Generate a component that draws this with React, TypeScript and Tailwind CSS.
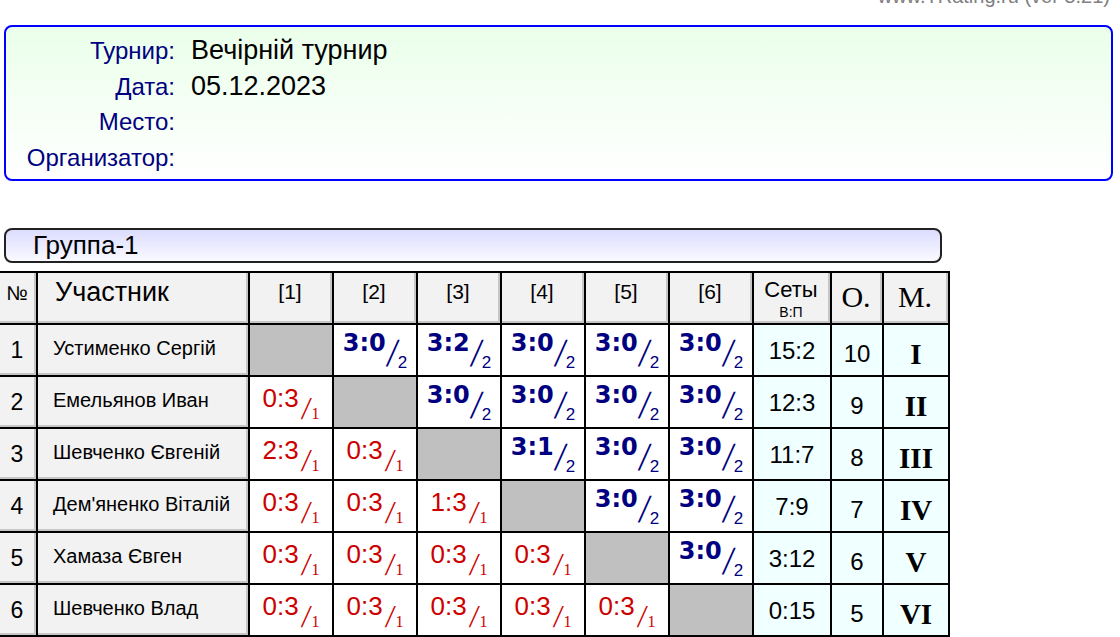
import React from "react";

const players = [
  "Устименко Сергій",
  "Емельянов Иван",
  "Шевченко Євгеній",
  "Дем'яненко Віталій",
  "Хамаза Євген",
  "Шевченко Влад",
];

const results = [
  ["", "3:0", "3:2", "3:0", "3:0", "3:0"],
  ["0:3", "", "3:0", "3:0", "3:0", "3:0"],
  ["2:3", "0:3", "", "3:1", "3:0", "3:0"],
  ["0:3", "0:3", "1:3", "", "3:0", "3:0"],
  ["0:3", "0:3", "0:3", "0:3", "", "3:0"],
  ["0:3", "0:3", "0:3", "0:3", "0:3", ""],
];

const totals = [
  { sets: "15:2", pts: "10", place: "I" },
  { sets: "12:3", pts: "9", place: "II" },
  { sets: "11:7", pts: "8", place: "III" },
  { sets: "7:9", pts: "7", place: "IV" },
  { sets: "3:12", pts: "6", place: "V" },
  { sets: "0:15", pts: "5", place: "VI" },
];

const head = "h-[50px] bg-[#f2f2f2] border-r-2 border-b-2 border-[#c6c6c6]";
const side = "h-[50px] bg-[#f0ffff]";

function Score({ v }: { v: string }) {
  if (!v) return <div className="h-[50px] bg-[#c0c0c0]" />;
  if (v.startsWith("3")) {
    return (
      <div className="flex h-[50px] items-start justify-center bg-white text-[#000080]">
        <span className="mt-[6px] font-['DejaVu_Sans',sans-serif] text-[24px] font-bold leading-none">{v}</span>
        <span className="mt-[8px] ml-[1px] -skew-x-6 font-['Liberation_Serif',serif] text-[40px] leading-none">/</span>
        <span className="mt-[29px] text-[17px] leading-none">2</span>
      </div>
    );
  }
  return (
    <div className="flex h-[50px] items-start justify-center bg-white text-[#cc0000]">
      <span className="mt-[8px] text-[26px] leading-none">{v}</span>
      <span className="mt-[15px] ml-[3px] -skew-x-6 font-['Liberation_Serif',serif] text-[32px] leading-none">/</span>
      <span className="mt-[29px] ml-[1px] font-['Liberation_Serif',serif] text-[16px] leading-none">1</span>
    </div>
  );
}

export default function App() {
  return (
    <div className="h-[637px] w-[1120px] overflow-hidden bg-white font-['Liberation_Sans',Arial,sans-serif] text-black">
      <div className="h-[25px] overflow-hidden pr-[10px] text-right">
        <div className="-mt-[14px] text-[20px] leading-[20px] text-[#808080]">www.TRating.ru (ver 5.21)</div>
      </div>

      <div className="ml-[4px] w-[1109px] rounded-[8px] border-2 border-[#0000ff] bg-linear-to-b from-[#eaffea] to-white pt-[5px] pb-[3px]">
        {[
          ["Турнир:", "Вечірній турнир"],
          ["Дата:", "05.12.2023"],
          ["Место:", ""],
          ["Организатор:", ""],
        ].map(([label, value]) => (
          <div key={label} className="flex h-[36px] items-baseline gap-[16px] leading-[36px]">
            <div className="w-[169px] text-right text-[24px] text-[#000080]">{label}</div>
            <div className="text-[27px]">{value}</div>
          </div>
        ))}
      </div>

      <div className="mt-[47px] ml-[4px] h-[35px] w-[938px] rounded-[8px] border-2 border-[#222222] bg-linear-to-b from-[#dcdcff] to-[#fafaff] pl-[27px] text-[26px] leading-[31px]">
        Группа-1
      </div>

      <div className="mt-[8px] grid w-fit grid-cols-[36px_210px_repeat(6,82px)_76px_50px_64px] gap-[2px] bg-black pt-[2px] pr-[2px] pb-[2px]">
        <div className={`${head} flex items-center justify-center pb-[8px] text-[20px]`}>№</div>
        <div className={`${head} flex items-center pl-[17px] pb-[10px] text-[27px]`}>Участник</div>
        {[1, 2, 3, 4, 5, 6].map((n) => (
          <div key={n} className={`${head} flex items-center justify-center pb-[10px] text-[21px]`}>
            [{n}]
          </div>
        ))}
        <div className={`${head} flex flex-col items-center pt-[6px]`}>
          <span className="text-[22px] leading-[22px]">Сеты</span>
          <span className="mt-[4px] text-[14px] leading-[14px]">В:П</span>
        </div>
        <div className={`${head} flex items-center justify-center pb-[2px] font-['Liberation_Serif',serif] text-[30px]`}>O.</div>
        <div className={`${head} flex items-center justify-center pb-[2px] font-['Liberation_Serif',serif] text-[30px]`}>M.</div>

        {players.map((name, i) => (
          <React.Fragment key={name}>
            <div className={`${head} flex items-center justify-center pt-[2px] text-[23px]`}>{i + 1}</div>
            <div className={`${head} flex items-center pl-[15px] pb-[2px] text-[20px]`}>{name}</div>
            {results[i].map((v, j) => (
              <Score key={j} v={v} />
            ))}
            <div className={`${side} flex items-center justify-center pt-[2px] text-[24px]`}>{totals[i].sets}</div>
            <div className={`${side} flex items-center justify-center pt-[8px] text-[24px]`}>{totals[i].pts}</div>
            <div className={`${side} flex items-center justify-center pt-[10px] font-['Liberation_Serif',serif] text-[29px] font-bold`}>
              {totals[i].place}
            </div>
          </React.Fragment>
        ))}
      </div>
    </div>
  );
}
